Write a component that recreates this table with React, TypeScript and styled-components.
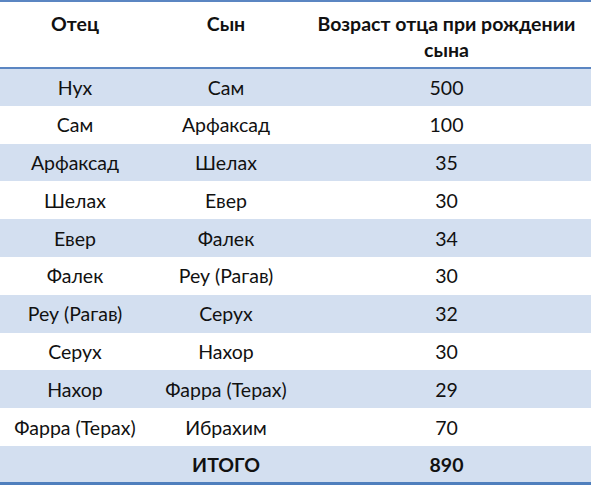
import React from "react";
import styled, { createGlobalStyle } from "styled-components";

const Global = createGlobalStyle`
  html, body { margin: 0; padding: 0; background: #ffffff; }
  body { font-family: Lato, "Open Sans", "Noto Sans", sans-serif; color: #111; }
`;

const Table = styled.table`
  width: 591px;
  border-collapse: collapse;
  table-layout: fixed;
  border-top: 2px solid #5b86c2;
  border-bottom: 3px solid #4f7fbd;
`;

const Col = styled.col<{ $w: number }>`
  width: ${(p) => p.$w}px;
`;

const HeadCell = styled.th`
  font-weight: 700;
  font-size: 19.5px;
  line-height: 26px;
  text-align: center;
  vertical-align: top;
  padding: 9px 2px 0;
  height: 56px;
  border-bottom: 2px solid #5b86c2;
  box-sizing: content-box;
`;

const Row = styled.tr<{ $band: boolean }>`
  background: ${(p) => (p.$band ? "#d3dff0" : "#ffffff")};
`;

const Cell = styled.td<{ $bold?: boolean }>`
  height: 37.8px;
  padding: 0 2px;
  font-size: 19.5px;
  font-weight: ${(p) => (p.$bold ? 700 : 400)};
  text-align: center;
  vertical-align: middle;
  box-sizing: border-box;
  white-space: nowrap;
`;

const rows: [string, string, string][] = [
  ["Нух", "Сам", "500"],
  ["Сам", "Арфаксад", "100"],
  ["Арфаксад", "Шелах", "35"],
  ["Шелах", "Евер", "30"],
  ["Евер", "Фалек", "34"],
  ["Фалек", "Реу (Рагав)", "30"],
  ["Реу (Рагав)", "Серух", "32"],
  ["Серух", "Нахор", "30"],
  ["Нахор", "Фарра (Терах)", "29"],
  ["Фарра (Терах)", "Ибрахим", "70"],
];

export default function App() {
  return (
    <>
      <Global />
      <Table>
        <colgroup>
          <Col $w={150} />
          <Col $w={152} />
          <Col $w={289} />
        </colgroup>
        <thead>
          <tr>
            <HeadCell>Отец</HeadCell>
            <HeadCell>Сын</HeadCell>
            <HeadCell>Возраст отца при рождении сына</HeadCell>
          </tr>
        </thead>
        <tbody>
          {rows.map((r, i) => (
            <Row key={i} $band={i % 2 === 0}>
              <Cell>{r[0]}</Cell>
              <Cell>{r[1]}</Cell>
              <Cell>{r[2]}</Cell>
            </Row>
          ))}
          <Row $band>
            <Cell />
            <Cell $bold>ИТОГО</Cell>
            <Cell $bold>890</Cell>
          </Row>
        </tbody>
      </Table>
    </>
  );
}
